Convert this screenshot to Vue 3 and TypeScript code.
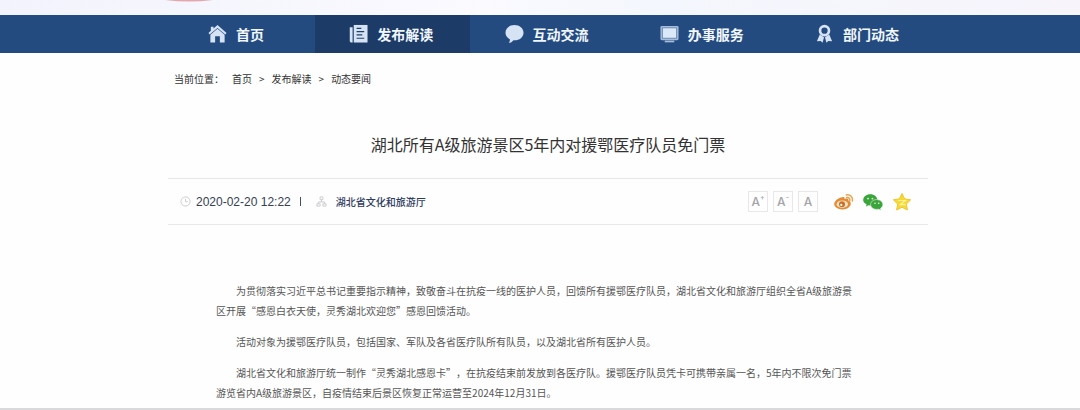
<script setup lang="ts">
interface NavItem {
  label: string
  icon: 'home' | 'news' | 'chat' | 'screen' | 'medal'
  active?: boolean
}

const navItems: NavItem[] = [
  { label: '首页', icon: 'home' },
  { label: '发布解读', icon: 'news', active: true },
  { label: '互动交流', icon: 'chat' },
  { label: '办事服务', icon: 'screen' },
  { label: '部门动态', icon: 'medal' },
]

const crumbs: string[] = ['首页', '发布解读', '动态要闻']

const sizeButtons = [
  { sign: '+', label: '放大字号' },
  { sign: '-', label: '缩小字号' },
  { sign: '', label: '默认字号' },
]

const paragraphs: string[] = [
  '为贯彻落实习近平总书记重要指示精神，致敬奋斗在抗疫一线的医护人员，回馈所有援鄂医疗队员，湖北省文化和旅游厅组织全省A级旅游景区开展“感恩白衣天使，灵秀湖北欢迎您”感恩回馈活动。',
  '活动对象为援鄂医疗队员，包括国家、军队及各省医疗队所有队员，以及湖北省所有医护人员。',
  '湖北省文化和旅游厅统一制作“灵秀湖北感恩卡”，在抗疫结束前发放到各医疗队。援鄂医疗队员凭卡可携带亲属一名，5年内不限次免门票游览省内A级旅游景区，自疫情结束后景区恢复正常运营至2024年12月31日。',
]
</script>

<template>
  <div class="page" lang="zh-CN">
    <header class="banner">
      <svg class="emblem" viewBox="0 0 48 2" aria-hidden="true">
        <path d="M0 0H48Q24 3 0 0Z" fill="#e3a7ad" />
      </svg>
    </header>

    <nav class="nav">
      <div class="nav-inner">
        <a
          v-for="item in navItems"
          :key="item.label"
          href="#"
          class="nav-item"
          :class="{ active: item.active }"
        >
          <svg class="nav-icon" viewBox="0 0 20 20" aria-hidden="true">
            <template v-if="item.icon === 'home'">
              <path d="M.5 9.500 3 7V3h2.800v1.700L10 1l9.500 8.500-1.300 1.600L10 4.200l-8.200 6.900z" />
              <path d="M10 4.900 17.500 11.400V19.500h-5V13h-5v6.500h-5v-8.100z" />
            </template>
            <template v-else-if="item.icon === 'news'">
              <path d="M5 1h14.500v18.500H5z" />
              <path d="M.800 3.500H3.800V19.500H2.200Q.800 19.500 .800 18z" />
              <path d="M8 4.500h5M8 8h8M8 11.500h6M8 15h8" stroke="#20416f" stroke-width="1.300" />
            </template>
            <template v-else-if="item.icon === 'chat'">
              <path d="M10 1c5.300 0 9.500 3.500 9.500 8.100s-4.200 8.100-9.500 8.100l-1-.1C7.500 18.800 6 19.800 4 19.800c1-1 1.300-2.200 1.100-3.800C2.300 14.500.500 12.100.500 9.100.500 4.500 4.700 1 10 1z" />
            </template>
            <template v-else-if="item.icon === 'screen'">
              <rect x="0.500" y="2" width="19" height="15" rx="1.500" fill="#a5bddb" />
              <rect x="2.500" y="4" width="15" height="11" fill="#dbe8f7" stroke="#6c88b0" />
              <path d="M5 17.500h10v1.800H5z" fill="#a5bddb" />
            </template>
            <template v-else>
              <circle cx="10" cy="7" r="4.700" fill="none" stroke="#d5e3f4" stroke-width="2.800" />
              <path d="M5 11 9.500 14 8 19.800l-2-2-4 .4zM15 11l-4.500 3 1.500 5.800 2-2 4 .4z" />
            </template>
          </svg>
          <span>{{ item.label }}</span>
        </a>
      </div>
    </nav>

    <main class="article">
      <div class="crumbs">
        <span class="crumbs-label">当前位置：</span>
        <template v-for="(crumb, i) in crumbs" :key="crumb">
          <span v-if="i > 0" class="crumb-sep">&gt;</span>
          <a href="#">{{ crumb }}</a>
        </template>
      </div>

      <h1 class="title">湖北所有A级旅游景区5年内对援鄂医疗队员免门票</h1>

      <div class="meta">
        <svg class="meta-icon" viewBox="0 0 12 12" aria-hidden="true">
          <circle cx="6" cy="6" r="5" />
          <path d="M6 3v3.300h2.600" />
        </svg>
        <time class="date" datetime="2020-02-20T12:22">2020-02-20 12:22</time>
        <span class="divider"></span>
        <svg class="meta-icon" viewBox="0 0 12 12" aria-hidden="true">
          <path d="M4.500 1h3v3h-3zM6 4v2.500M2.500 8.500V6.500h7v2M1 8.500h3.500v2.500H1zM7.500 8.500H11v2.500H7.500z" />
        </svg>
        <span class="source">湖北省文化和旅游厅</span>

        <div class="sizes">
          <button v-for="b in sizeButtons" :key="b.label" type="button" :aria-label="b.label">
            A<sup v-if="b.sign">{{ b.sign }}</sup>
          </button>
        </div>

        <div class="share">
          <a href="#" aria-label="微博">
            <svg viewBox="0 0 20 20">
              <path d="M8.300 5.200c1.400-.5 2.600 0 2.300 1.700 2-.8 4.200-.5 3.700 1.600 1.400.5 2.500 1.400 2.500 2.900 0 3.200-3.700 6-8.300 6S.200 15.100.200 12.100C.200 9.200 4.700 5.200 8.300 5.200z" fill="#e58b34" />
              <ellipse cx="8.300" cy="12.200" rx="5.700" ry="3.700" fill="#fbe3c3" />
              <circle cx="8" cy="12.300" r="3" fill="#c8702a" />
              <circle cx="7.300" cy="12.900" r="1.100" fill="#fff" />
              <path d="M12.700 5.500c2-.4 3.600 1 3.100 3M12.300 2.900c3.900-.8 7 2.200 6.100 6" fill="none" stroke="#eca04a" stroke-width="1.500" stroke-linecap="round" />
            </svg>
          </a>
          <a href="#" aria-label="微信">
            <svg viewBox="0 0 20 20">
              <path d="M7.300 2.300c4 0 7 2.500 7 5.600s-3 5.600-7 5.600l-1.800-.2L3 14.600l.6-2.300C1.500 11.400.200 9.900.200 7.900c0-3.100 3.100-5.600 7.100-5.600z" fill="#39a53b" />
              <path d="M13.600 7.600c3.500 0 6.200 2.200 6.200 4.900 0 1.600-.9 2.900-2.300 3.800l.5 1.900-2.300-1-2.100.2c-3.400 0-6-2.200-6-4.900s2.600-4.900 6-4.900z" fill="#39a53b" stroke="#e9f7e7" stroke-width=".6" />
              <g fill="#e3f7df"><circle cx="5" cy="6.600" r=".9" /><circle cx="9.400" cy="6.600" r=".9" /><circle cx="12" cy="11.300" r=".8" /><circle cx="15.700" cy="11.300" r=".8" /></g>
            </svg>
          </a>
          <a href="#" aria-label="QQ空间">
            <svg viewBox="0 0 20 20">
              <path d="m10 1.500 2.700 5.400 6 .9-4.400 4.200 1.100 6L10 15.200 4.600 18l1.100-6L1.300 7.800l6-.9z" fill="#f6d936" stroke="#edc92b" stroke-linejoin="round" />
              <path d="M6.300 8.500h7L8 12.700h5.800" fill="none" stroke="#fff29a" stroke-width="1.200" />
            </svg>
          </a>
        </div>
      </div>

      <div class="body">
        <p v-for="p in paragraphs" :key="p">{{ p }}</p>
      </div>
    </main>
  </div>
</template>

<style>
body {
  margin: 0;
}
</style>

<style scoped>
.page {
  box-sizing: border-box;
  min-height: 100vh;
  background: #fefefe;
  border-bottom: 2px solid #d9d9db;
  font-family: "Noto Sans CJK SC", sans-serif;
  font-size: 10px;
  color: #444;
  text-spacing-trim: space-all;
}
a {
  color: inherit;
  text-decoration: none;
}
.banner {
  height: 15px;
  padding-left: 165px;
  background: linear-gradient(90deg, #f2f3fc, #fafaff 45%, #f4f7fd 60%, #f7f4fc);
}
.emblem {
  display: block;
  width: 48px;
  height: 2px;
}
.nav {
  padding-left: 16px;
  background: #234b80;
}
.nav-inner {
  display: flex;
  max-width: 776px;
  margin: 0 auto;
}
.nav-item {
  flex: 1;
  display: flex;
  align-items: center;
  justify-content: center;
  gap: 9px;
  box-sizing: border-box;
  height: 38px;
  padding: 0 3px 1px 0;
  font-size: 14px;
  line-height: 20px;
  font-weight: 700;
  color: #f1f7ff;
}
.nav-item.active {
  background: #1d3b67;
}
.nav-icon {
  width: 19px;
  height: 19px;
  fill: #d5e3f4;
}
.article {
  max-width: 760px;
  margin: 0 auto;
  padding-left: 16px;
}
.crumbs {
  display: flex;
  align-items: center;
  height: 20px;
  padding: 15px 6px 0;
  color: #333;
}
.crumbs-label {
  margin-right: 8px;
}
.crumb-sep {
  margin: 0 7px;
}
.title {
  margin: 44px 0 0;
  font-size: 16px;
  line-height: 24px;
  font-weight: 400;
  text-align: center;
  color: #333;
}
.meta {
  display: flex;
  align-items: center;
  height: 45px;
  margin-top: 22px;
  padding: 0 16px 0 12px;
  border-top: 1px solid #e6e6e8;
  border-bottom: 1px solid #e9e9eb;
}
.meta-icon {
  width: 11px;
  height: 11px;
  fill: none;
  stroke: #c9c9cd;
}
.date {
  margin-left: 5px;
  font-family: "Liberation Sans", sans-serif;
  font-size: 12px;
  color: #354052;
}
.divider {
  width: 1px;
  height: 9px;
  margin: 0 15px 0 9px;
  background: #44506a;
}
.source {
  margin-left: 9px;
  font-weight: 500;
  color: #2d3b5e;
}
.sizes {
  display: flex;
  gap: 5px;
  margin-left: auto;
}
.sizes button {
  display: flex;
  align-items: center;
  justify-content: center;
  box-sizing: border-box;
  width: 20px;
  height: 21px;
  padding: 0;
  border: 1px solid #e9e6ec;
  background: #fefefe;
  font-family: Inter, sans-serif;
  font-size: 12px;
  font-weight: 500;
  color: #a3a3a7;
}
.sizes sup {
  font-size: 7px;
  line-height: 7px;
  align-self: flex-start;
  margin-top: 2px;
}
.share {
  display: flex;
  gap: 9px;
  margin-left: 16px;
}
.share svg {
  display: block;
  width: 20px;
  height: 20px;
}
.body {
  max-width: 640px;
  margin-top: 56px;
  padding-left: 48px;
}
.body p {
  margin: 0 0 11px;
  line-height: 20px;
  text-indent: 2em;
  color: #555;
}
.body p:last-child {
  margin-bottom: 0;
}
</style>
